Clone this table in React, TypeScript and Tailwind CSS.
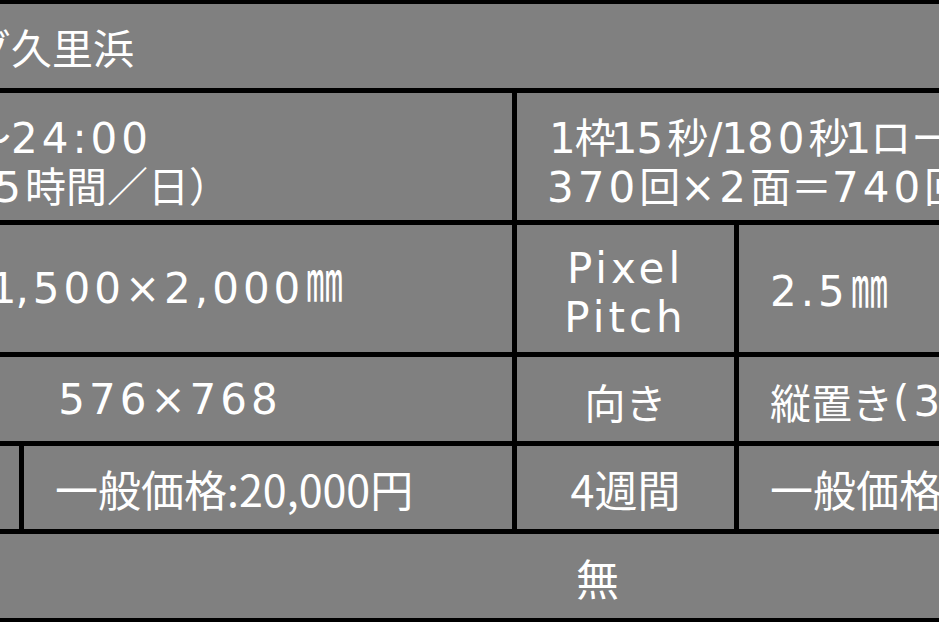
import React from 'react'

const LATIN = /[\x20-\x7e\u00d7]/

// the "1" in the source font is narrow, so pull its neighbours in
const Latin = ({ r }: { r: string }) => (
  <span className="font-['DejaVu_Sans'] text-[42px] tracking-[4px]">
    {r.split(/(1)/).map((p, i) =>
      p === '1' ? <span key={i} className="-mx-[5px]">1</span> : p
    )}
  </span>
)

// splits a string into latin / japanese runs so each gets its own font
const Txt = ({ t }: { t: string }) => {
  const runs = t.match(/[\x20-\x7e\u00d7]+|㎜|[^\x20-\x7e\u00d7㎜]+/g) ?? []
  return (
    <>
      {runs.map((r, i) => {
        if (r === '㎜')
          return (
            <span key={i} className="inline-block font-['Noto_Sans_CJK_JP'] text-[41px] scale-x-[0.9] scale-y-[1.35] origin-bottom">
              {r}
            </span>
          )
        return LATIN.test(r[0]) ? (
          <Latin key={i} r={r} />
        ) : (
          <span key={i} className="font-['Noto_Sans_CJK_JP'] text-[41px]">{r}</span>
        )
      })}
    </>
  )
}

const cell = "bg-[#808080] overflow-hidden whitespace-nowrap"
const jp = "font-['Noto_Sans_CJK_JP'] text-[43px] font-normal"
const line = "h-[49px] leading-[49px]"

const App = () => {
  return (
    <div className="w-[939px] h-[626px] overflow-hidden bg-white">
      <div className="flex flex-col gap-[5px] bg-black pt-[4px] pb-[4px] text-white leading-[49px]">
        {/* 施設名 */}
        <div className="flex h-[84px]">
          <div className={`${cell} flex-1 flex items-center pt-[12px]`}>
            <div className="w-[134px] shrink-0 flex justify-end">
              <span><Txt t="ウイング久里浜" /></span>
            </div>
          </div>
        </div>

        {/* 放映時間 */}
        <div className="flex gap-[5px] h-[127px]">
          <div className={`${cell} w-[512px] shrink-0 flex flex-col justify-center pt-[6px]`}>
            <div className={`${line} w-[152px] flex justify-end`}>
              <span><Txt t="9:00〜24:00" /></span>
            </div>
            <div className={`${line} w-[230px] flex justify-end`}>
              <span><Txt t="（15時間／日）" /></span>
            </div>
          </div>
          <div className={`${cell} flex-1 min-w-0 flex flex-col justify-center pl-[30px] pt-[6px]`}>
            <div className={`${line} pl-[7px]`}><Txt t="1枠15秒/180秒1ローテーション" /></div>
            <div className={line}><Txt t="370回×2面＝740回" /></div>
          </div>
        </div>

        {/* サイズ */}
        <div className="flex gap-[5px] h-[127px]">
          <div className={`${cell} w-[512px] shrink-0 flex items-center pt-[6px]`}>
            <div className="w-[340px] shrink-0 flex justify-center">
              <span><Txt t="1,500×2,000㎜" /></span>
            </div>
          </div>
          <div className={`${cell} w-[217px] shrink-0 flex flex-col items-center justify-center pt-[8px]`}>
            <div className={line}><Txt t="Pixel" /></div>
            <div className={line}><Txt t="Pitch" /></div>
          </div>
          <div className={`${cell} flex-1 min-w-0 flex items-center pl-[31px] pt-[6px]`}>
            <Txt t="2.5㎜" />
          </div>
        </div>

        {/* 解像度 */}
        <div className="flex gap-[5px] h-[84px]">
          <div className={`${cell} w-[512px] shrink-0 flex items-center pt-[10px]`}>
            <div className="w-[340px] shrink-0 flex justify-center">
              <span><Txt t="576×768" /></span>
            </div>
          </div>
          <div className={`${cell} w-[217px] shrink-0 flex items-center justify-center pt-[4px]`}>
            <Txt t="向き" />
          </div>
          <div className={`${cell} flex-1 min-w-0 flex items-center pl-[31px] pt-[4px]`}>
            <Txt t="縦置き(3:4)" />
          </div>
        </div>

        {/* 料金 */}
        <div className="flex gap-[5px] h-[83px]">
          <div className={`${cell} w-[19px] shrink-0`} />
          <div className={`${cell} ${jp} w-[488px] shrink-0 flex items-center pl-[31px] pt-[2px]`}>
            一般価格:20,000円
          </div>
          <div className={`${cell} ${jp} w-[217px] shrink-0 flex items-center justify-center pt-[2px]`}>
            4週間
          </div>
          <div className={`${cell} ${jp} flex-1 min-w-0 flex items-center pl-[31px] pt-[2px]`}>
            一般価格:40,000円
          </div>
        </div>

        {/* 音声 */}
        <div className="flex h-[84px]">
          <div className={`${cell} ${jp} flex-1 flex items-center pl-[576px] pt-[2px]`}>
            無
          </div>
        </div>
      </div>
    </div>
  )
}

export default App
